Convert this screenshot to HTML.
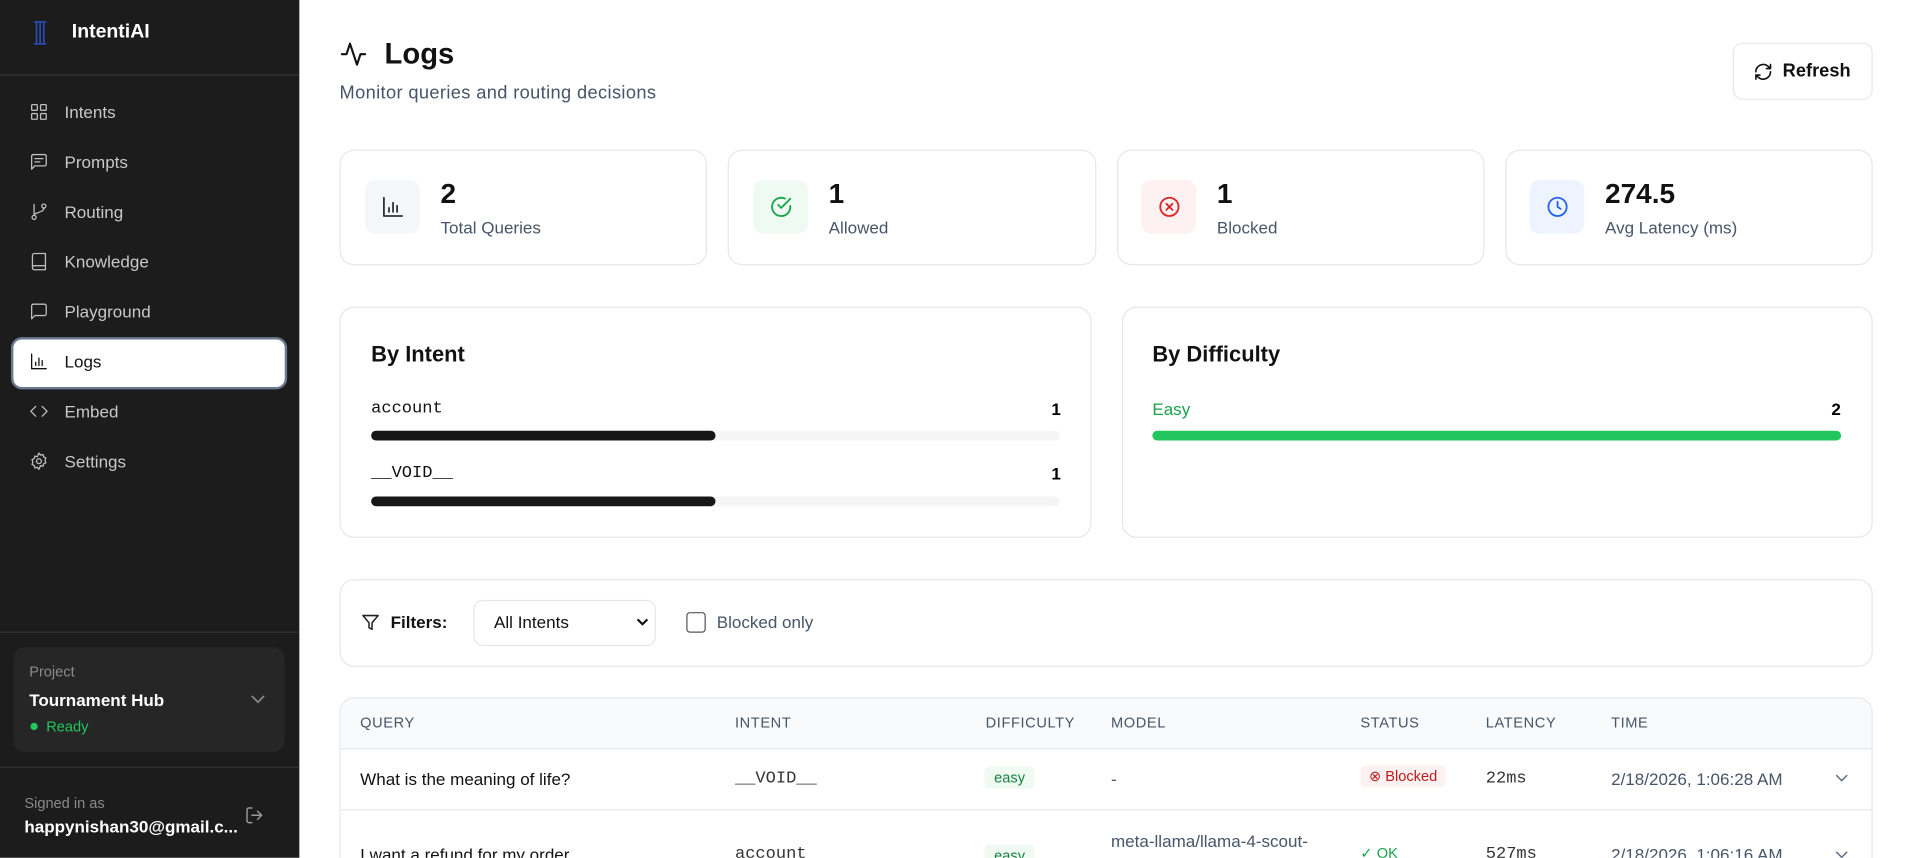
<!DOCTYPE html>
<html><head><meta charset="utf-8"><style>
*{box-sizing:border-box;margin:0;padding:0}
html,body{width:1908px;height:858px;overflow:hidden;background:#fff;font-family:"Liberation Sans",sans-serif}
#w{position:absolute;left:0;top:0;width:1568px;height:705px;overflow:hidden;transform:scale(1.21684);transform-origin:0 0}
.a{position:absolute}
.sb{left:0;top:0;width:246px;height:705px;background:#1c1c1c}
.nav{left:24px;color:#c8c8c8;font-size:14px;display:flex;align-items:center;gap:13px}
.nav svg{width:16px;height:16px;stroke:#bdbdbd;fill:none;stroke-width:1.6;stroke-linecap:round;stroke-linejoin:round}
.card{border:1px solid #e5e7eb;border-radius:12px;background:#fff}
.ib{width:45px;height:44px;border-radius:8px;display:flex;align-items:center;justify-content:center}
.ib svg{width:20px;height:20px;fill:none;stroke-width:1.8;stroke-linecap:round;stroke-linejoin:round}
.num{font-size:23px;font-weight:bold;color:#111}
.lbl{font-size:14px;color:#475569}
.mono{font-family:"Liberation Mono",monospace}
.th{font-size:12px;color:#475569;letter-spacing:.5px;top:587px}
.td{font-size:14px;color:#111}
</style></head><body><div id="w">
<div class="a sb"></div>
<svg class="a" style="left:27px;top:17px" width="12" height="20" viewBox="0 0 12 20"><g stroke="#2b4fb8" stroke-width="1.3"><line x1="1" y1="1" x2="11" y2="1"/><line x1="1" y1="19" x2="11" y2="19"/><line x1="3" y1="1" x2="3" y2="19"/><line x1="6" y1="1" x2="6" y2="19"/><line x1="9" y1="1" x2="9" y2="19"/></g></svg>
<div class="a" style="left:59px;top:18px;color:#fff;font-size:16px;font-weight:bold">IntentiAI</div>
<div class="a" style="left:0;top:61px;width:246px;height:1px;background:#333"></div>
<div class="a nav" style="top:84px"><svg viewBox="0 0 24 24"><rect x="3" y="3" width="7" height="7" rx="1"/><rect x="14" y="3" width="7" height="7" rx="1"/><rect x="3" y="14" width="7" height="7" rx="1"/><rect x="14" y="14" width="7" height="7" rx="1"/></svg>Intents</div>
<div class="a nav" style="top:125px"><svg viewBox="0 0 24 24"><path d="M21 15a2 2 0 0 1-2 2H7l-4 4V5a2 2 0 0 1 2-2h14a2 2 0 0 1 2 2z"/><path d="M7 8h10M7 12h6"/></svg>Prompts</div>
<div class="a nav" style="top:166px"><svg viewBox="0 0 24 24"><circle cx="6" cy="19" r="2.5"/><circle cx="18" cy="5" r="2.5"/><path d="M6 3v13.5M18 7.5c0 6-12 5-12 9"/></svg>Routing</div>
<div class="a nav" style="top:207px"><svg viewBox="0 0 24 24"><path d="M4 19.5V4.5A2.5 2.5 0 0 1 6.5 2H20v20H6.5A2.5 2.5 0 0 1 4 19.5zM4 19.5A2.5 2.5 0 0 1 6.5 17H20"/></svg>Knowledge</div>
<div class="a nav" style="top:248px"><svg viewBox="0 0 24 24"><path d="M21 15a2 2 0 0 1-2 2H7l-4 4V5a2 2 0 0 1 2-2h14a2 2 0 0 1 2 2z"/></svg>Playground</div>
<div class="a" style="left:9px;top:277px;width:227px;height:43px;background:#fff;border:2px solid #6b7a90;border-radius:9px"></div>
<div class="a nav" style="top:289px;color:#111"><svg viewBox="0 0 24 24" style="stroke:#111"><path d="M3 3v18h18M8 17v-4M12 17V8M16 17v-6"/></svg>Logs</div>
<div class="a nav" style="top:330px"><svg viewBox="0 0 24 24"><path d="M8 6l-6 6 6 6M16 6l6 6-6 6"/></svg>Embed</div>
<div class="a nav" style="top:371px"><svg viewBox="0 0 24 24"><circle cx="12" cy="12" r="3"/><path d="M12 2l2 2.5 3-.8.8 3L20.5 8l-1 3 1 3-2.7 1.3-.8 3-3-.8L12 22l-2-2.5-3 .8-.8-3L3.5 16l1-3-1-3 2.7-1.3.8-3 3 .8z"/></svg>Settings</div>
<div class="a" style="left:0;top:519px;width:246px;height:1px;background:#333"></div>
<div class="a" style="left:11px;top:532px;width:223px;height:86px;background:#262626;border-radius:9px"></div>
<div class="a" style="left:24px;top:545px;font-size:12px;color:#8a8a8a">Project</div>
<div class="a" style="left:24px;top:567px;font-size:14px;color:#fff;font-weight:bold">Tournament Hub</div>
<svg class="a" style="left:206px;top:571px" width="12" height="8" viewBox="0 0 12 8"><path d="M1 1l5 5 5-5" fill="none" stroke="#888" stroke-width="1.4"/></svg>
<div class="a" style="left:25px;top:594px;width:6px;height:6px;border-radius:50%;background:#22c55e"></div>
<div class="a" style="left:38px;top:590px;font-size:12px;color:#22c55e">Ready</div>
<div class="a" style="left:0;top:630px;width:246px;height:1px;background:#333"></div>
<div class="a" style="left:20px;top:653px;font-size:12px;color:#8a8a8a">Signed in as</div>
<div class="a" style="left:20px;top:671px;font-size:14px;color:#fff;font-weight:bold">happynishan30@gmail.c...</div>
<svg class="a" style="left:201px;top:662px" width="16" height="16" viewBox="0 0 24 24" fill="none" stroke="#999" stroke-width="1.8" stroke-linecap="round" stroke-linejoin="round"><path d="M9 21H5a2 2 0 0 1-2-2V5a2 2 0 0 1 2-2h4M16 17l5-5-5-5M21 12H9"/></svg>

<svg class="a" style="left:279px;top:33px" width="23" height="23" viewBox="0 0 24 24" fill="none" stroke="#111" stroke-width="1.8" stroke-linecap="round" stroke-linejoin="round"><path d="M22 12h-4l-3 9L9 3l-3 9H2"/></svg>
<div class="a" style="left:316px;top:31px;font-size:24px;font-weight:bold;color:#111">Logs</div>
<div class="a" style="left:279px;top:68px;font-size:15px;color:#475569;letter-spacing:.3px">Monitor queries and routing decisions</div>
<div class="a card" style="left:1424px;top:35px;width:115px;height:47px;border-radius:8px"></div>
<svg class="a" style="left:1441px;top:51px" width="16" height="16" viewBox="0 0 24 24" fill="none" stroke="#111" stroke-width="2" stroke-linecap="round" stroke-linejoin="round"><path d="M3 12a9 9 0 0 1 15-6.7L21 8M21 3v5h-5M21 12a9 9 0 0 1-15 6.7L3 16M3 21v-5h5"/></svg>
<div class="a" style="left:1465px;top:50px;font-size:15px;font-weight:bold;color:#111">Refresh</div>

<div class="a card" style="left:279px;top:123px;width:302px;height:95px"></div>
<div class="a ib" style="left:300px;top:148px;background:#f5f6f8"><svg viewBox="0 0 24 24" stroke="#333"><path d="M3 3v18h18M8 17v-4M12 17V8M16 17v-6"/></svg></div>
<div class="a num" style="left:362px;top:146px">2</div><div class="a lbl" style="left:362px;top:179px">Total Queries</div>
<div class="a card" style="left:598px;top:123px;width:303px;height:95px"></div>
<div class="a ib" style="left:619px;top:148px;background:#effbf2"><svg viewBox="0 0 24 24" stroke="#16a34a"><path d="M21 11.1V12a9 9 0 1 1-5.3-8.2"/><path d="M21 4L12 13l-3-3"/></svg></div>
<div class="a num" style="left:681px;top:146px">1</div><div class="a lbl" style="left:681px;top:179px">Allowed</div>
<div class="a card" style="left:918px;top:123px;width:302px;height:95px"></div>
<div class="a ib" style="left:938px;top:148px;background:#fef1f1"><svg viewBox="0 0 24 24" stroke="#dc2626"><circle cx="12" cy="12" r="9"/><path d="M15 9l-6 6M9 9l6 6"/></svg></div>
<div class="a num" style="left:1000px;top:146px">1</div><div class="a lbl" style="left:1000px;top:179px">Blocked</div>
<div class="a card" style="left:1237px;top:123px;width:302px;height:95px"></div>
<div class="a ib" style="left:1257px;top:148px;background:#eef4ff"><svg viewBox="0 0 24 24" stroke="#2563eb"><circle cx="12" cy="12" r="9"/><path d="M12 7v5l3 2"/></svg></div>
<div class="a num" style="left:1319px;top:146px">274.5</div><div class="a lbl" style="left:1319px;top:179px">Avg Latency (ms)</div>

<div class="a card" style="left:279px;top:252px;width:618px;height:190px"></div>
<div class="a" style="left:305px;top:281px;font-size:18px;font-weight:bold;color:#111">By Intent</div>
<div class="a mono" style="left:305px;top:328px;font-size:14px;color:#111">account</div><div class="a" style="left:864px;top:328px;font-size:14px;font-weight:bold">1</div>
<div class="a" style="left:305px;top:354px;width:566px;height:8px;border-radius:4px;background:#f5f5f5"><div style="width:50%;height:8px;border-radius:4px;background:#171717"></div></div>
<div class="a mono" style="left:305px;top:381px;font-size:14px;color:#111">__VOID__</div><div class="a" style="left:864px;top:381px;font-size:14px;font-weight:bold">1</div>
<div class="a" style="left:305px;top:408px;width:566px;height:8px;border-radius:4px;background:#f5f5f5"><div style="width:50%;height:8px;border-radius:4px;background:#171717"></div></div>
<div class="a card" style="left:922px;top:252px;width:617px;height:190px"></div>
<div class="a" style="left:947px;top:281px;font-size:18px;font-weight:bold;color:#111">By Difficulty</div>
<div class="a" style="left:947px;top:328px;font-size:14px;color:#16a34a">Easy</div><div class="a" style="left:1505px;top:328px;font-size:14px;font-weight:bold">2</div>
<div class="a" style="left:947px;top:354px;width:566px;height:8px;border-radius:4px;background:#22c55e"></div>

<div class="a card" style="left:279px;top:476px;width:1260px;height:72px"></div>
<svg class="a" style="left:297px;top:504px" width="15" height="15" viewBox="0 0 24 24" fill="none" stroke="#222" stroke-width="2" stroke-linejoin="round"><path d="M22 3H2l8 9.5V19l4 2v-8.5z"/></svg>
<div class="a" style="left:321px;top:503px;font-size:14px;font-weight:bold;color:#111">Filters:</div>
<div class="a" style="left:389px;top:493px;width:150px;height:38px;border:1px solid #e5e7eb;border-radius:8px"></div>
<div class="a" style="left:406px;top:503px;font-size:14px;color:#111">All Intents</div>
<svg class="a" style="left:523px;top:508px" width="10" height="7" viewBox="0 0 10 7"><path d="M1 1l4 4 4-4" fill="none" stroke="#111" stroke-width="1.8"/></svg>
<div class="a" style="left:564px;top:503px;width:16px;height:17px;border:1.5px solid #555;border-radius:3px"></div>
<div class="a" style="left:589px;top:503px;font-size:14px;color:#475569">Blocked only</div>

<div class="a" style="left:279px;top:573px;width:1260px;height:150px;border:1px solid #e5e7eb;border-radius:12px;overflow:hidden">
<div style="height:42px;background:#f8fafc;border-bottom:1px solid #e5e7eb"></div>
<div style="height:50px;border-bottom:1px solid #e5e7eb"></div></div>
<div class="a th" style="left:296px">QUERY</div><div class="a th" style="left:604px">INTENT</div><div class="a th" style="left:810px">DIFFICULTY</div><div class="a th" style="left:913px">MODEL</div><div class="a th" style="left:1118px">STATUS</div><div class="a th" style="left:1221px">LATENCY</div><div class="a th" style="left:1324px">TIME</div>
<div class="a td" style="left:296px;top:632px">What is the meaning of life?</div>
<div class="a td mono" style="left:604px;top:632px;color:#333">__VOID__</div>
<div class="a" style="left:809px;top:630px;padding:2px 8px;background:#effbf2;color:#15803d;border-radius:4px;font-size:12px">easy</div>
<div class="a td" style="left:913px;top:632px;color:#475569">-</div>
<div class="a" style="left:1118px;top:629px;padding:2px 7px;background:#fef1f1;color:#b91c1c;border-radius:4px;font-size:12px">&#8855; Blocked</div>
<div class="a td mono" style="left:1221px;top:632px;color:#333">22ms</div>
<div class="a td" style="left:1324px;top:632px;color:#475569">2/18/2026, 1:06:28 AM</div>
<svg class="a" style="left:1508px;top:636px" width="11" height="7" viewBox="0 0 11 7"><path d="M1 1l4.5 4.5L10 1" fill="none" stroke="#64748b" stroke-width="1.3"/></svg>
<div class="a td" style="left:296px;top:694px">I want a refund for my order</div>
<div class="a td mono" style="left:604px;top:694px;color:#333">account</div>
<div class="a" style="left:809px;top:694px;padding:2px 8px;background:#effbf2;color:#15803d;border-radius:4px;font-size:12px">easy</div>
<div class="a td" style="left:913px;top:683px;color:#475569">meta-llama/llama-4-scout-</div>
<div class="a" style="left:1118px;top:694px;color:#16a34a;font-size:12px">&#10003; OK</div>
<div class="a td mono" style="left:1221px;top:694px;color:#333">527ms</div>
<div class="a td" style="left:1324px;top:694px;color:#475569">2/18/2026, 1:06:16 AM</div>
<svg class="a" style="left:1508px;top:699px" width="11" height="7" viewBox="0 0 11 7"><path d="M1 1l4.5 4.5L10 1" fill="none" stroke="#64748b" stroke-width="1.3"/></svg>
</div></body></html>
